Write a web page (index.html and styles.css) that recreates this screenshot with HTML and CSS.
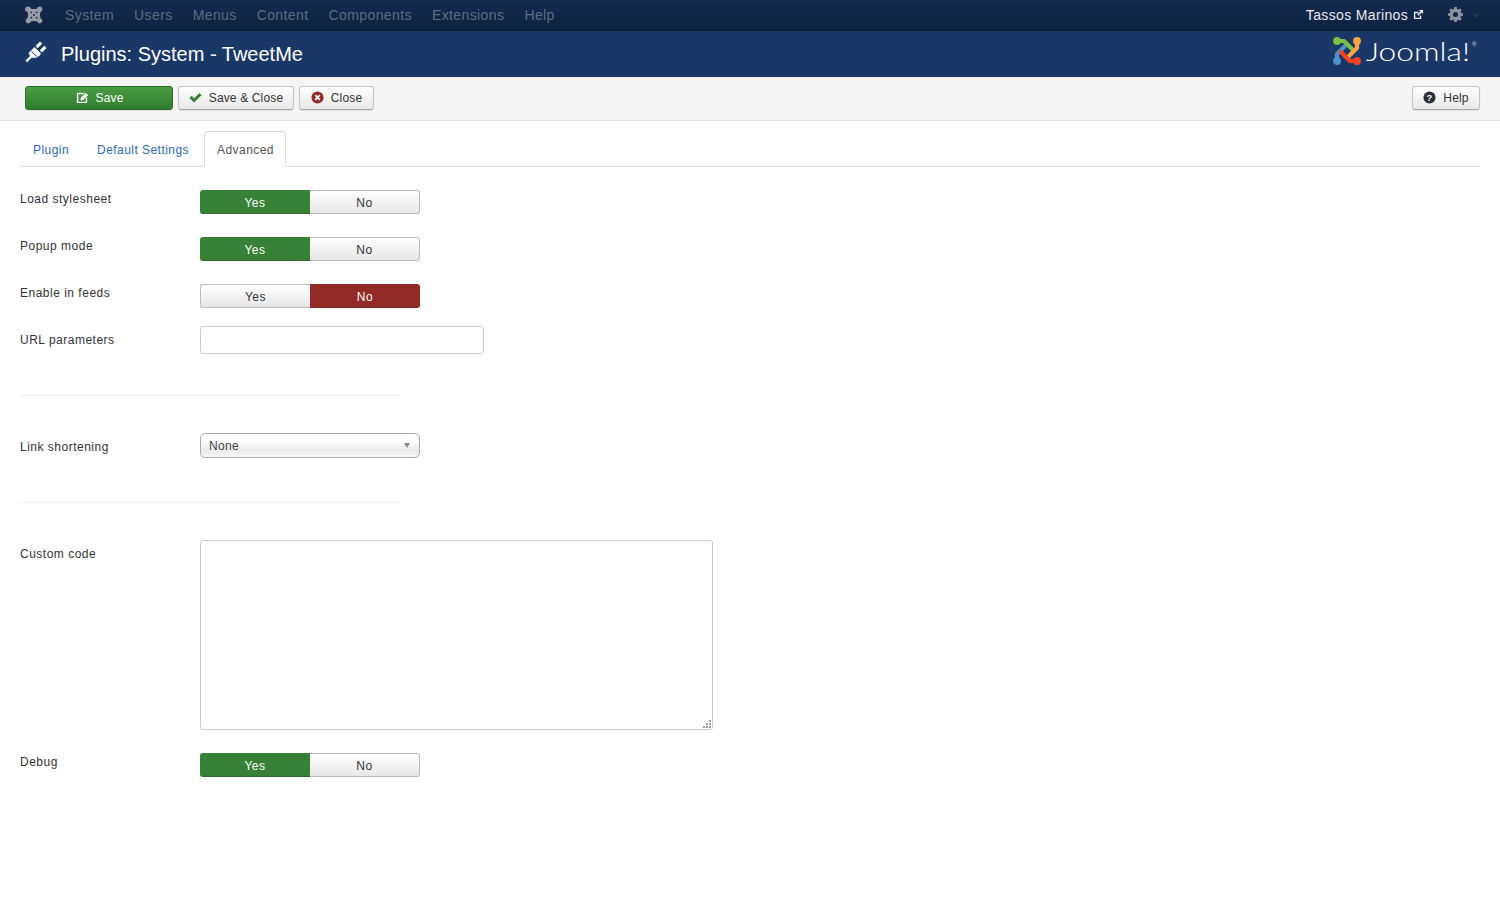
FILE: index.html
```html
<!DOCTYPE html>
<html lang="en">
<head>
<meta charset="utf-8">
<title>Plugins: System - TweetMe</title>
<link rel="stylesheet" href="styles.css">
</head>
<body>
<nav class="topnav">
  <svg class="brand" viewBox="0 0 20 20" width="18" height="18"><path fill="#979ca5" d="M3.500 0.500a3 3 0 0 1 3 2.200Q10 4 13.500 2.700a3 3 0 1 1 3.800 3.800Q16 10 17.300 13.500a3 3 0 1 1-3.800 3.800Q10 16 6.500 17.300a3 3 0 1 1-3.800-3.800Q4 10 2.700 6.500a3 3 0 0 1 .8-6z"/><g fill="#1a2c4c"><circle cx="7" cy="7" r="1"/><circle cx="13" cy="7" r="1"/><circle cx="7" cy="13" r="1"/><circle cx="13" cy="13" r="1"/><circle cx="10" cy="10" r="1.200"/></g></svg>
  <ul class="menu">
    <li>System</li><li>Users</li><li>Menus</li><li>Content</li><li>Components</li><li>Extensions</li><li>Help</li>
  </ul>
  <div class="user">
    <span class="user-name">Tassos Marinos</span>
    <svg class="ext" viewBox="0 0 12 12" width="11" height="11"><path d="M1 3h5v1.500H2.500v5h5V7H9v4H1z" fill="#e6e9ee"/><path d="M6.500 1H11v4.500L9.400 3.900 6 7.300 4.700 6l3.400-3.400z" fill="#e6e9ee"/></svg>
    <svg class="gear" viewBox="0 0 16 16" width="15" height="15"><path fill="#8b929d" fill-rule="evenodd" d="M6.700 0h2.600l.4 2.100 1.300.6 1.800-1.200 1.800 1.800-1.200 1.800.6 1.300 2 .4v2.600l-2 .4-.6 1.300 1.200 1.800-1.800 1.800-1.800-1.200-1.300.6-.4 2.100H6.700l-.4-2.100-1.300-.6-1.800 1.200-1.800-1.800 1.200-1.800-.6-1.300-2-.4V6.800l2-.4.6-1.300-1.200-1.800 1.800-1.800L5 2.700l1.300-.6zM8 5.300a2.700 2.700 0 1 0 0 5.400 2.700 2.700 0 0 0 0-5.400z"/></svg>
    <span class="caret-dark"></span>
  </div>
</nav>
<header class="titlebar">
  <svg class="plug" viewBox="0 0 24 24" width="24" height="24"><g fill="#fff"><path d="M4.500 13 L10.500 7 L17 13.500 C15 17.500 10.500 18.800 7.800 17.600 L3.200 22.200 L1.500 20.500 L6.100 15.900 C5.400 15.100 4.900 14 4.500 13Z"/><path d="M11.500 6 L16 1.500 L18.200 3.700 L13.700 8.200Z"/><path d="M15.800 10.300 L20.300 5.800 L22.500 8 L18 12.500Z"/></g><path d="M7.500 11.500 L13.500 17" stroke="#1a3867" stroke-width="1" fill="none"/></svg>
  <h1 class="page-title">Plugins: System - TweetMe</h1>
  <div class="logo">
    <svg viewBox="0 0 30 30" width="30" height="30">
      <g fill="none" stroke-width="4.200" stroke-linecap="round" stroke-linejoin="round">
        <path d="M5 25 L5 18 L14 9" stroke="#5091cd"/>
        <path d="M5 5 L12 5 L21 14" stroke="#7ac143"/>
        <path d="M25 5 L25 12 L16 21" stroke="#f9a541"/>
        <path d="M25 25 L18 25 L9 16" stroke="#f44321"/>
      </g>
      <circle cx="5" cy="5" r="3.900" fill="#7ac143"/>
      <circle cx="25" cy="5" r="3.900" fill="#f9a541"/>
      <circle cx="5" cy="25" r="3.900" fill="#5091cd"/>
      <circle cx="25" cy="25" r="3.900" fill="#f44321"/>
    </svg>
    <span class="logo-text">Joomla!</span><span class="logo-reg">®</span>
  </div>
</header>
<div class="toolbar">
  <button class="btn btn-save" type="button">
    <svg viewBox="0 0 14 14" width="13" height="13"><path d="M1 2h8L7.500 3.500H2.500v8h8V8L12 6.500V13H1z" fill="#fff"/><path d="M5 7.500 10.500 2 13 4.500 7.500 10H5z" fill="#fff"/></svg>
    <span>Save</span>
  </button>
  <button class="btn btn-saveclose" type="button">
    <svg viewBox="0 0 14 14" width="13" height="13"><path d="M0.500 7.500 2.800 5.200 5.500 7.900 11.200 2.200 13.500 4.500 5.500 12.500z" fill="#378137"/></svg>
    <span>Save &amp; Close</span>
  </button>
  <button class="btn btn-close" type="button">
    <svg viewBox="0 0 14 14" width="13" height="13"><circle cx="7" cy="7" r="6.500" fill="#942a25"/><path d="M4.500 4.500 9.500 9.500M9.500 4.500 4.500 9.500" stroke="#fff" stroke-width="2"/></svg>
    <span>Close</span>
  </button>
  <button class="btn btn-help" type="button">
    <svg viewBox="0 0 14 14" width="13" height="13"><circle cx="7" cy="7" r="6.500" fill="#2a2f38"/><text x="7" y="10.500" text-anchor="middle" class="qmark">?</text></svg>
    <span>Help</span>
  </button>
</div>
<main class="content">
  <ul class="tabs">
    <li class="tab">Plugin</li>
    <li class="tab">Default Settings</li>
    <li class="tab tab-active">Advanced</li>
  </ul>
  <form class="form">
    <div class="row">
      <label class="label">Load stylesheet</label>
      <div class="toggle"><span class="opt opt-yes">Yes</span><span class="opt">No</span></div>
    </div>
    <div class="row">
      <label class="label">Popup mode</label>
      <div class="toggle"><span class="opt opt-yes">Yes</span><span class="opt">No</span></div>
    </div>
    <div class="row">
      <label class="label">Enable in feeds</label>
      <div class="toggle"><span class="opt">Yes</span><span class="opt opt-no">No</span></div>
    </div>
    <div class="row">
      <label class="label">URL parameters</label>
      <input class="text-input" type="text">
    </div>
    <hr class="sep">
    <div class="row">
      <label class="label">Link shortening</label>
      <div class="select"><span>None</span><span class="select-caret"></span></div>
    </div>
    <hr class="sep">
    <div class="row">
      <label class="label">Custom code</label>
      <div class="textarea-wrap">
        <textarea class="textarea"></textarea>
        <svg class="grip" viewBox="0 0 9 9" width="9" height="9"><g fill="#9a9a9a"><rect x="6" y="0" width="2" height="2"/><rect x="3" y="3" width="2" height="2"/><rect x="6" y="3" width="2" height="2"/><rect x="0" y="6" width="2" height="2"/><rect x="3" y="6" width="2" height="2"/><rect x="6" y="6" width="2" height="2"/></g></svg>
      </div>
    </div>
    <div class="row">
      <label class="label">Debug</label>
      <div class="toggle"><span class="opt opt-yes">Yes</span><span class="opt">No</span></div>
    </div>
  </form>
</main>
</body>
</html>
```
FILE: styles.css
```css
* { box-sizing: border-box; }
html, body { margin: 0; padding: 0; height: 100%; }
body { background: #fff; color: #333; font-family: "Liberation Sans", Arial, sans-serif; font-size: 12px; overflow: hidden; }

.topnav { height: 31px; display: flex; align-items: center; padding: 0 20px 1px 25px; background: linear-gradient(#142a50, #0e2240); border-bottom: 1px solid #0b1a33; }
.brand { flex: none; margin-right: 22px; }
.menu { display: flex; gap: 20px; list-style: none; margin: 0; padding: 0; font-size: 14px; letter-spacing: 0.4px; color: #5f6b7f; }
.user { margin-left: auto; display: flex; align-items: center; font-size: 14px; letter-spacing: 0.35px; color: #e6e9ee; }
.ext { margin-left: 5px; }
.gear { margin-left: 24px; }
.caret-dark { width: 0; height: 0; margin-left: 9px; margin-top: 2px; border: 4px solid transparent; border-top-color: #243553; border-bottom-width: 0; }

.titlebar { height: 46px; display: flex; align-items: center; padding: 0 25px 0 24px; background: #1a3867; color: #fff; }
.plug { flex: none; margin-right: 13px; margin-top: -4px; }
.page-title { margin: 0; font-size: 20px; font-weight: 400; }
.logo { margin-left: auto; display: flex; align-items: center; margin-top: -6px; }
.logo svg { margin-right: 4px; }
.logo-text { width: 106px; font-family: Lato, sans-serif; font-weight: 300; font-size: 25px; color: #fff; transform: scaleX(1.27); transform-origin: left center; white-space: nowrap; }
.logo-reg { width: 3px; font-size: 6px; align-self: flex-start; margin-top: 5px; color: #dfe5ee; }

.toolbar { height: 44px; display: flex; align-items: flex-start; gap: 5px; padding: 9px 20px 0 25px; background: #f5f5f5; border-bottom: 1px solid #e3e3e3; }
.btn { height: 24px; display: inline-flex; align-items: center; justify-content: center; gap: 7px; padding: 0; font: 12px "Liberation Sans", Arial, sans-serif; letter-spacing: 0.15px; color: #333; background: linear-gradient(#fff, #e8e8e8); border: 1px solid #c4c4c4; border-bottom-color: #a9a9a9; border-radius: 3px; box-shadow: 0 1px 1px rgba(0,0,0,.08); }
.btn svg { margin-top: -2px; }
.btn-save { width: 148px; padding-left: 1px; color: #fff; background: linear-gradient(#4a9c40, #2f7d32); border-color: #2c6b2c; }
.btn-saveclose { width: 116px; }
.btn-close { width: 75px; }
.btn-help { width: 68px; margin-left: auto; }
.qmark { font: bold 10px "Liberation Sans", Arial, sans-serif; fill: #fff; }

.content { padding: 10px 20px 0; }
.tabs { display: flex; list-style: none; margin: 0 0 18px; padding: 0; height: 36px; border-bottom: 1px solid #ddd; }
.tab { height: 36px; padding: 0 13px; margin-right: 2px; line-height: 38px; color: #2a69b8; letter-spacing: 0.45px; }
.tab-active { width: 82px; color: #555; background: #fff; border: 1px solid #ddd; border-bottom-color: #fff; border-radius: 4px 4px 0 0; line-height: 36px; padding: 0 0 0 12px; margin-right: 0; }

.row { display: flex; align-items: flex-start; margin-bottom: 18px; min-height: 29px; }
.label { flex: none; width: 180px; padding-top: 7px; line-height: 15px; letter-spacing: 0.5px; color: #333; }
.toggle { display: flex; width: 220px; height: 24px; margin-top: 5px; border-radius: 3px; letter-spacing: 0.5px; }
.opt { width: 110px; display: flex; align-items: center; justify-content: center; padding-top: 1px; color: #333; background: linear-gradient(#fff, #e6e6e6); border: 1px solid #bbb; }
.opt:first-child { border-radius: 3px 0 0 3px; border-right: 0; }
.opt:last-child { border-radius: 0 3px 3px 0; border-left: 0; }
.opt-yes, .opt-no { color: #fff; border: 0; box-shadow: inset 0 -1px 0 rgba(0,0,0,.15); }
.opt-yes { background: #378137; }
.opt-no { background: #942a25; }
.text-input { width: 284px; height: 28px; padding: 0 8px; background: #fff; border: 1px solid #ccc; border-radius: 3px; }
.select { width: 220px; height: 25px; display: flex; align-items: center; justify-content: space-between; padding: 0 9px 0 8px; color: #444; letter-spacing: 0.3px; background: linear-gradient(#fff 30%, #e9e9e9 70%, #f7f7f7); border: 1px solid #aaa; border-radius: 5px; }
.select-caret { width: 0; height: 0; border: 3.500px solid transparent; border-top: 5px solid #888; border-bottom-width: 0; }
.sep { width: 380px; height: 1px; margin: 40px 0 37px; background: #eee; border: 0; }
.textarea-wrap { position: relative; width: 513px; height: 190px; }
.textarea { display: block; width: 100%; height: 100%; padding: 6px; background: #fff; border: 1px solid #ccc; border-radius: 3px; resize: none; }
.grip { position: absolute; right: 1px; bottom: 1px; }
.row:last-child { margin-bottom: 0; }
```
